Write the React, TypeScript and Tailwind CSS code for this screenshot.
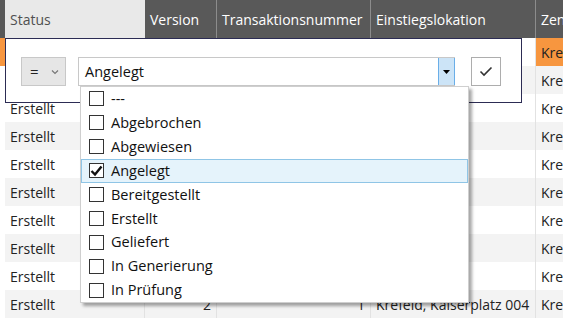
import React from 'react';

const font = { fontFamily: '"Open Sans", "Noto Sans", sans-serif' };

const statuses = [
  '---',
  'Abgebrochen',
  'Abgewiesen',
  'Angelegt',
  'Bereitgestellt',
  'Erstellt',
  'Geliefert',
  'In Generierung',
  'In Prüfung',
];

type Row = { status: string; version: string; tx: string; ort: string; zen: string };

// first two rows lie under the filter panel
const rows: Row[] = [
  { status: '', version: '', tx: '', ort: '', zen: 'Kre' },
  { status: '', version: '', tx: '', ort: '', zen: 'Kre' },
  { status: 'Erstellt', version: '', tx: '', ort: '', zen: 'Kre' },
  { status: 'Erstellt', version: '', tx: '', ort: '', zen: 'Kre' },
  { status: 'Erstellt', version: '', tx: '', ort: '', zen: 'Kre' },
  { status: 'Erstellt', version: '', tx: '', ort: '', zen: 'Kre' },
  { status: 'Erstellt', version: '', tx: '', ort: '', zen: 'Kre' },
  { status: 'Erstellt', version: '', tx: '', ort: '', zen: 'Kre' },
  { status: 'Erstellt', version: '', tx: '', ort: '', zen: 'Kre' },
  { status: 'Erstellt', version: '2', tx: '1', ort: 'Krefeld, Kaiserplatz 004', zen: 'Kre' },
];

const HeaderCell = ({ label, className }: { label: string; className: string }) => (
  <div className={`h-full flex items-center px-[5px] border-r border-[#8c8c8c] text-white text-[14px] overflow-hidden whitespace-nowrap ${className}`}>
    {label}
  </div>
);

export default function App() {
  return (
    <div className="relative w-[563px] h-[318px] overflow-hidden bg-white text-[#222]" style={font}>
      {/* header */}
      <div className="flex h-[38px] bg-[#595959]">
        <div className="w-[5px] shrink-0" />
        <div className="w-[140px] shrink-0 h-full flex items-center px-[5px] bg-[#e9e9e9] text-[#505050] text-[14px]">
          Status
        </div>
        <HeaderCell label="Version" className="w-[72px] shrink-0" />
        <HeaderCell label="Transaktionsnummer" className="w-[154px] shrink-0" />
        <HeaderCell label="Einstiegslokation" className="w-[165px] shrink-0" />
        <HeaderCell label="Zen" className="flex-1 border-r-0" />
      </div>

      {/* rows */}
      {rows.map((r, i) => {
        const selected = i === 0;
        const bg = i % 2 === 1 ? 'bg-[#f3f3f3]' : 'bg-white';
        return (
          <div key={i} className="flex h-[28px] text-[14px] whitespace-nowrap">
            <div className={`w-[5px] shrink-0 ${selected ? 'bg-[#f7963f]' : 'bg-white'}`} />
            <div className={`w-[140px] shrink-0 flex items-center px-[5px] border-r border-[#e2e2e2] ${bg}`}>{r.status}</div>
            <div className={`w-[72px] shrink-0 flex items-center justify-end px-[5px] border-r border-[#e2e2e2] ${bg}`}>{r.version}</div>
            <div className={`w-[154px] shrink-0 flex items-center justify-end px-[5px] border-r border-[#e2e2e2] ${bg}`}>{r.tx}</div>
            <div className={`w-[165px] shrink-0 flex items-center px-[5px] border-r border-[#e2e2e2] ${bg}`}>{r.ort}</div>
            <div className={`flex-1 flex items-center px-[5px] overflow-hidden ${selected ? 'bg-[#f7963f]' : bg}`}>{r.zen}</div>
          </div>
        );
      })}

      {/* filter panel */}
      <div className="absolute left-[5px] top-[38px] w-[517px] h-[65px] bg-white border border-[#2c2c54] flex items-start pt-[18px] pl-[15px]">
        <div className="w-[45px] h-[29px] bg-[#e6e6e6] border border-[#c8c8c8] flex items-center pl-[8px] text-[15px] text-[#222]">
          <span className="w-[16px]">=</span>
          <svg width="8" height="6" viewBox="0 0 8 6" fill="none" stroke="#777" strokeWidth="1.2" className="ml-[5px]">
            <path d="M1 1.5 L4 4.5 L7 1.5" />
          </svg>
        </div>
        <div className="ml-[12px] w-[377px] h-[29px] border border-[#c8c8c8] bg-white flex items-center">
          <span className="flex-1 pl-[6px] text-[14.5px] text-[#111]">Angelegt</span>
          <div className="w-[17px] h-full bg-[#cce4f7] border-l border-r border-[#6aaee8] flex items-center justify-center mr-[-1px]">
            <svg width="7" height="4" viewBox="0 0 7 4">
              <path d="M0 0 L7 0 L3.5 4 Z" fill="#000" />
            </svg>
          </div>
        </div>
        <div className="ml-[16px] w-[30px] h-[29px] border border-[#adadad] bg-white flex items-center justify-center">
          <svg width="14" height="11" viewBox="0 0 14 11" fill="none" stroke="#333" strokeWidth="1.6">
            <path d="M1.5 5.5 L5 9 L12.5 1.5" />
          </svg>
        </div>
      </div>

      {/* dropdown list */}
      <div className="absolute left-[80px] top-[86px] w-[389px] h-[217px] bg-white border border-[#cfcfcf] shadow-[3px_3px_3px_rgba(0,0,0,0.35)] flex flex-col">
        {statuses.map((s) => {
          const checked = s === 'Angelegt';
          return (
            <div
              key={s}
              className={`h-[24px] flex items-center pl-[7px] gap-[7px] text-[14.5px] text-[#111] border ${checked ? 'bg-[#e5f3fb] border-[#8fc5e6]' : 'border-transparent'}`}
            >
              <div className="w-[15px] h-[15px] border border-[#333] bg-white flex items-center justify-center">
                {checked && (
                  <svg width="13" height="12" viewBox="0 0 13 12" fill="none" stroke="#111" strokeWidth="2.4">
                    <path d="M1.5 6 L5 9.5 L11.5 1.5" />
                  </svg>
                )}
              </div>
              <span>{s}</span>
            </div>
          );
        })}
      </div>
    </div>
  );
}
